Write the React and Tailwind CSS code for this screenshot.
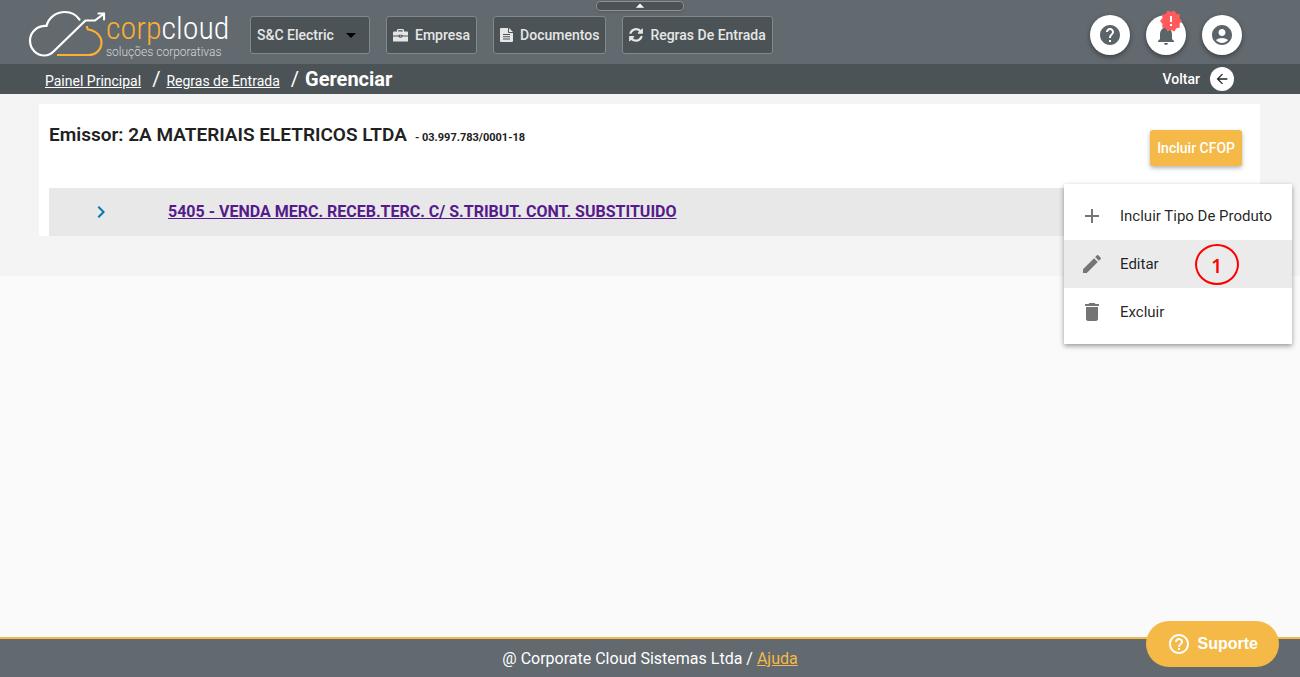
import React, { useState } from "react";
import {
  MdAccountCircle,
  MdAdd,
  MdArrowBack,
  MdArrowDropDown,
  MdArrowDropUp,
  MdChevronRight,
  MdDelete,
  MdEdit,
  MdHelp,
  MdHelpOutline,
  MdNewReleases,
  MdNotifications,
} from "react-icons/md";

const BriefcaseIcon = () => (
  <svg width="15" height="13" viewBox="0 0 15 13" fill="currentColor">
    <path d="M4 2.500V1.200Q4 0 5.200 0h4.600Q11 0 11 1.200v1.300h3q1 0 1 1V6.600H9.500V5.800H5.500v.8H0V3.500q0-1 1-1zM5.200 2.500h4.600V1.200H5.200z" />
    <path d="M0 7.500h5.500q.3 1.200 2 1.200t2-1.200H15V12q0 .5-.5.500h-14Q0 12.500 0 12z" />
    <path d="M6.700 6.600h1.600v1H6.700z" />
  </svg>
);

const FileIcon = () => (
  <svg width="13" height="14" viewBox="0 0 13 14" fill="currentColor">
    <path
      fillRule="evenodd"
      d="M1 0h7v4q0 1 1 1h4v8q0 1-1 1H1q-1 0-1-1V1q0-1 1-1zM3 6v1h7V6zM3 8.200v1h7v-1zM3 10.400v1h7v-1z"
    />
    <path d="M9 0l4 4H9z" />
  </svg>
);

const RefreshIcon = () => (
  <svg width="14" height="15" viewBox="0 0 1536 1664" fill="currentColor">
    <path d="M1511 928q0 5-1 7-64 268-268 434.500t-478 166.500q-146 0-282.500-55t-243.500-157l-129 129q-19 19-45 19t-45-19-19-45v-448q0-26 19-45t45-19h448q26 0 45 19t19 45-19 45l-137 137q71 66 161 102t187 36q134 0 250-65t186-179q11-17 53-117 8-23 30-23h192q13 0 22.500 9.500t9.500 22.500zm25-800v448q0 26-19 45t-45 19h-448q-26 0-45-19t-19-45 19-45l138-138q-148-137-349-137-134 0-250 65t-186 179q-11 17-53 117-8 23-30 23h-199q-13 0-22.500-9.500t-9.500-22.500v-7q65-268 270-434.500t480-166.500q146 0 284 55.500t245 156.500l130-129q19-19 45-19t45 19 19 45z" />
  </svg>
);

const navItems = [
  { label: "Empresa", icon: <BriefcaseIcon /> },
  { label: "Documentos", icon: <FileIcon /> },
  { label: "Regras De Entrada", icon: <RefreshIcon /> },
];

const menuItems = [
  { label: "Incluir Tipo De Produto", icon: MdAdd },
  { label: "Editar", icon: MdEdit, mark: "1" },
  { label: "Excluir", icon: MdDelete },
];

const Logo = () => (
  <a href="#" className="flex w-[200px] shrink-0 items-start">
    <svg
      className="shrink-0"
      width="78"
      height="48"
      viewBox="0 0 78 48"
      fill="none"
      strokeWidth="2.200">
      <path
        stroke="#fff"
        strokeLinejoin="round"
        strokeLinecap="round"
        d="M51.500 9.500C48 4.500 43 2 37 2C28 2 20.500 7.500 18.500 16C9.500 15.500 2 22 2 30.500C2 39 8.500 45.500 16.500 45.500C20.500 45.500 23 44 25.500 41.500L57.500 10.500H67L75.500 4"
      />
      <path stroke="#fff" strokeLinecap="round" d="M70.500 3.500H76V9.500" />
      <path
        stroke="#fbb034"
        d="M59 16V17.500L60 19.500C68 20.500 73.500 26 73.500 32.500C73.500 39.500 68 45 60.500 45H29"
      />
    </svg>
    <span className="flex flex-col">
      <span className="font-['Roboto_Condensed','Roboto',sans-serif] text-[32px] font-light leading-9 text-white">
        <span className="text-[#fbb034]">corp</span>cloud
      </span>
      <span className="whitespace-nowrap text-xs font-light leading-3 text-[#d5d8da]">
        soluções corporativas
      </span>
    </span>
  </a>
);

const RoundButton = ({ label, children }) => (
  <button
    type="button"
    aria-label={label}
    className="relative flex size-10 items-center justify-center rounded-full bg-white text-[#5b6469] shadow-[0_2px_5px_rgba(0,0,0,0.4)]">
    {children}
  </button>
);

const Header = () => {
  const [company, setCompany] = useState("S&C Electric");

  return (
    <header className="relative flex h-16 items-center bg-[#62696f] pl-7 pr-[58px] pt-1">
      <button
        type="button"
        aria-label="Recolher"
        className="absolute left-1/2 top-px flex h-[10px] w-[88px] -translate-x-[54px] items-center justify-center overflow-hidden rounded border border-[#8b9195] bg-[#4b5356] text-white shadow">
        <MdArrowDropUp size={20} className="shrink-0" />
      </button>
      <Logo />
      <nav className="ml-[22px] mt-[2px] flex gap-4 text-sm font-medium text-[#e6e6e6]">
        <label className="relative flex h-[38px] w-[120px] items-center rounded-[3px] border border-[#82898d] bg-[#4b5356]">
          <select
            aria-label="Empresa selecionada"
            value={company}
            onChange={(e) => setCompany(e.target.value)}
            className="h-full w-full appearance-none bg-transparent pl-[6px] outline-none">
            <option>S&C Electric</option>
          </select>
          <MdArrowDropDown
            size={24}
            className="pointer-events-none absolute right-[6px] text-black"
          />
        </label>
        {navItems.map((item) => (
          <button
            type="button"
            key={item.label}
            className="flex h-[38px] items-center gap-[7px] whitespace-nowrap rounded-[3px] border border-[#82898d] bg-[#4b5356] px-[6px]">
            {item.icon}
            {item.label}
          </button>
        ))}
      </nav>
      <div className="ml-auto mt-[2px] flex gap-4">
        <RoundButton label="Ajuda">
          <MdHelp size={24} />
        </RoundButton>
        <RoundButton label="Notificações">
          <MdNotifications size={24} />
          <span className="absolute -top-[6px] left-[13px] text-[#ff5b5b]">
            <span className="absolute inset-[7px] bg-white" />
            <MdNewReleases size={24} className="relative" />
          </span>
        </RoundButton>
        <RoundButton label="Conta">
          <MdAccountCircle size={24} />
        </RoundButton>
      </div>
    </header>
  );
};

const Breadcrumb = () => (
  <div className="flex h-[30px] items-center justify-between bg-[#4b5356] pl-[45px] pr-[66px] text-white">
    <nav className="flex items-baseline text-sm">
      <a href="#" className="underline">
        Painel Principal
      </a>
      <span className="ml-[11px] mr-[6px] text-xl leading-7">/</span>
      <a href="#" className="underline">
        Regras de Entrada
      </a>
      <span className="ml-[11px] mr-[6px] text-xl leading-7">/</span>
      <h1 className="text-xl font-bold leading-7">Gerenciar</h1>
    </nav>
    <button type="button" className="flex items-center gap-[10px] text-sm font-medium">
      Voltar
      <span className="flex size-6 items-center justify-center rounded-full bg-white text-[#222]">
        <MdArrowBack size={16} />
      </span>
    </button>
  </div>
);

const OptionsMenu = () => (
  <ul className="absolute -right-[42px] -top-1 z-10 w-[228px] bg-white py-2 shadow-[0_2px_5px_rgba(0,0,0,0.4)]">
    {menuItems.map((item) => (
      <li key={item.label}>
        <button
          type="button"
          className={
            item.mark
              ? "flex h-12 w-full items-center gap-4 bg-[#ebebeb] px-4"
              : "flex h-12 w-full items-center gap-4 px-4"
          }>
          <item.icon size={24} className="text-[#757575]" />
          <span className="whitespace-nowrap text-[15px] text-black/87">
            {item.label}
          </span>
          {item.mark && (
            <span className="ml-5 flex h-[41px] w-11 items-center justify-center rounded-[50%] border-2 border-[#f00] pt-1 font-['Open_Sans',sans-serif] text-xl font-semibold text-[#f00]">
              {item.mark}
            </span>
          )}
        </button>
      </li>
    ))}
  </ul>
);

const App = () => {
  return (
    <div className="flex min-h-screen flex-col bg-[#fafafa] font-['Roboto',sans-serif]">
      <Header />
      <Breadcrumb />
      <main className="bg-[#f4f4f4] pb-10 pl-[39px] pr-10 pt-[10px]">
        <section className="bg-white px-[10px] text-[#212121]">
          <div className="flex h-[84px] items-start justify-between pr-2 pt-4">
            <h2 className="flex items-baseline gap-2 text-[19px] font-semibold leading-[30px]">
              Emissor: 2A MATERIAIS ELETRICOS LTDA
              <span className="text-[11px] font-bold">- 03.997.783/0001-18</span>
            </h2>
            <button
              type="button"
              className="mt-[10px] h-9 rounded-[3px] bg-[#f5b947] px-[7px] text-sm font-medium text-white shadow-[0_2px_4px_rgba(0,0,0,0.3)]">
              Incluir CFOP
            </button>
          </div>
          <div className="relative flex h-12 items-center bg-[#e8e8e8]">
            <button type="button" aria-label="Expandir" className="ml-10 text-[#0277ab]">
              <MdChevronRight size={24} />
            </button>
            <a
              href="#"
              className="ml-[55px] font-bold text-[#551a8b] underline">
              5405 - VENDA MERC. RECEB.TERC. C/ S.TRIBUT. CONT. SUBSTITUIDO
            </a>
            <OptionsMenu />
          </div>
        </section>
      </main>
      <footer className="mt-auto flex h-10 items-center justify-center border-t-2 border-[#f5b947] bg-[#62696f] pt-[2px] text-base text-white">
        <p>
          @ Corporate Cloud Sistemas Ltda /{" "}
          <a href="#" className="text-[#f5b947] underline">
            Ajuda
          </a>
        </p>
      </footer>
      <button
        type="button"
        className="fixed bottom-[10px] right-[21px] flex h-[46px] items-center gap-[7px] rounded-full bg-[#f5b947] px-[21px] font-['Liberation_Sans',sans-serif] text-base font-bold text-white">
        <MdHelpOutline size={24} />
        Suporte
      </button>
    </div>
  );
};

export default App;
